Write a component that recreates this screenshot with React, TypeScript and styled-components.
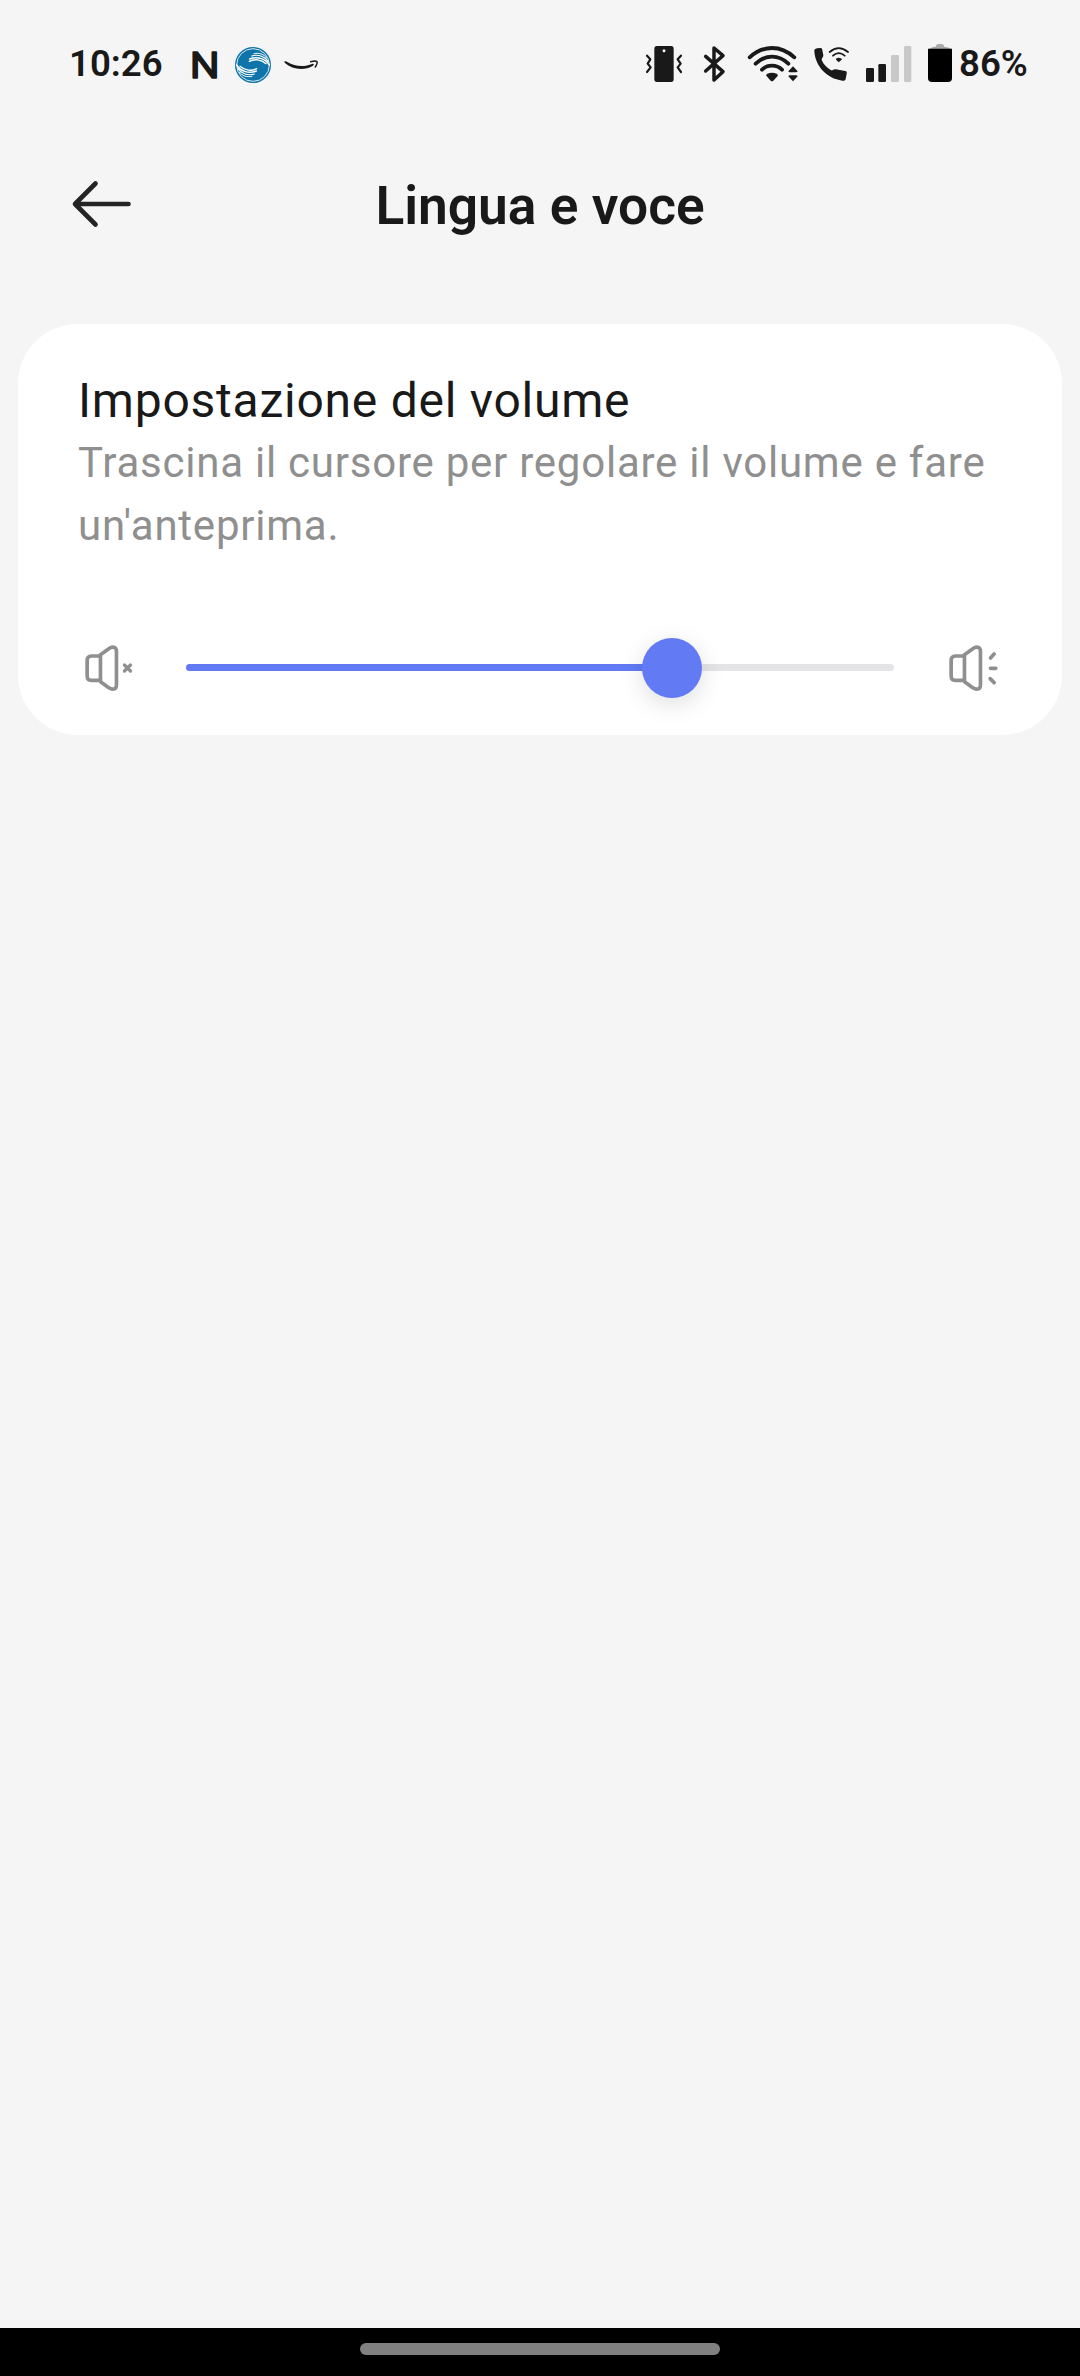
import React, { useState } from "react";
import styled, { createGlobalStyle } from "styled-components";

const INK = "#191919";
const GRAY = "#8f8f8f";
const PAGE = "#f5f5f5";

const GlobalStyle = createGlobalStyle`
  * { box-sizing: border-box; }
  body { margin: 0; background: ${PAGE}; font-family: Roboto, "Liberation Sans", sans-serif; }
`;

const Screen = styled.div`
  display: flex;
  flex-direction: column;
  width: 1080px;
  height: 2376px;
  background: ${PAGE};
  color: ${INK};
`;

const StatusBar = styled.div`
  display: flex;
  justify-content: space-between;
  height: 126px;
  padding: 30px 52px 0 69px;
`;

const StatusGroup = styled.div`
  display: flex;
  align-items: flex-start;
  height: 70px;
`;

const StatusText = styled.span<{ $width: number }>`
  width: ${(p) => p.$width}px;
  padding-top: 13px;
  font-size: 36.6px;
  font-weight: 560;
  line-height: 42px;
  white-space: nowrap;
`;

const StatusIcon = styled.svg<{ $width: number; $after?: number }>`
  display: block;
  flex: none;
  width: ${(p) => p.$width}px;
  height: 70px;
  margin-right: ${(p) => p.$after ?? 0}px;
`;

const Header = styled.header`
  display: grid;
  grid-template-columns: 72px 1fr 72px;
  align-items: center;
  height: 156px;
  padding: 0 66px;
`;

const BackButton = styled.button`
  display: flex;
  width: 72px;
  height: 72px;
  padding: 0;
  border: 0;
  background: none;
`;

const Title = styled.h1`
  margin: 4px 0 0;
  font-size: 53.3px;
  font-weight: 600;
  line-height: 64px;
  text-align: center;
`;

const Card = styled.section`
  display: flex;
  flex-direction: column;
  height: 411px;
  margin: 42px 18px 0;
  padding: 48px 60px 0;
  border-radius: 60px;
  background: #fff;
`;

const CardTitle = styled.h2`
  margin: 0;
  font-size: 48px;
  font-weight: 400;
  line-height: 57px;
  letter-spacing: 0.76px;
`;

const CardText = styled.p`
  margin: 2px 0 0;
  color: ${GRAY};
  font-size: 42px;
  line-height: 63px;
  letter-spacing: 0.76px;
`;

const VolumeRow = styled.div`
  display: flex;
  align-items: center;
  justify-content: space-between;
  height: 73px;
  margin-top: 74px;
`;

const SpeakerIcon = styled.svg`
  display: block;
  flex: none;
  width: 60px;
  height: 60px;
`;

const Track = styled.div`
  display: flex;
  align-items: center;
  width: 708px;
  height: 7px;
  border-radius: 4px;
  background: #e4e4e6;
`;

const Fill = styled.div`
  display: flex;
  align-items: center;
  justify-content: flex-end;
  height: 7px;
  border-radius: 4px;
  background: #627af4;
`;

const Thumb = styled.div`
  flex: none;
  width: 60px;
  height: 60px;
  margin-right: -30px;
  border-radius: 50%;
  background: #627af4;
  box-shadow: 0 6px 24px rgba(0, 0, 0, 0.13);
`;

const NavBar = styled.footer`
  display: flex;
  justify-content: center;
  height: 48px;
  margin-top: auto;
  padding-top: 15px;
  background: #000;
`;

const NavPill = styled.div`
  width: 360px;
  height: 12px;
  border-radius: 6px;
  background: #808080;
`;

const LetterLogo = () => (
  <StatusIcon $width={28} $after={15} viewBox="0 0 28 70">
    <text x="-1.2" y="47.9" textLength="30" lengthAdjust="spacingAndGlyphs" fontFamily="Roboto" fontSize="37" fontWeight="400" fill={INK} stroke={INK} strokeWidth="1.4" strokeLinejoin="round">N</text>
  </StatusIcon>
);

const swirlStreaks = (
  <>
    <path d="M612 71C628 67 642 73 650 84" strokeWidth="3" />
    <path d="M605 78C624 72 644 79 654 94" strokeWidth="3.5" />
    <path d="M599 87C620 78 646 85 658 105" strokeWidth="4.5" />
    <path d="M598 94C612 86 634 88 648 101" strokeWidth="4" />
  </>
);

const SwirlLogo = () => (
  <StatusIcon $width={38} $after={11} viewBox="552 0 114 210">
    <circle cx="609" cy="105" r="54" fill="#0f74a9" />
    <circle cx="609" cy="105" r="49" fill="none" stroke="#fff" strokeWidth="2.5" />
    <g fill="none" stroke="#fff" strokeLinecap="round">
      {swirlStreaks}
      <g transform="rotate(180 609 105)">{swirlStreaks}</g>
    </g>
  </StatusIcon>
);

const SmileLogo = () => (
  <StatusIcon $width={36} viewBox="699 0 108 210">
    <path d="M703 95C706 92 709 94 712 96C735 111 765 111 786 102C791 100 794 104 789 107C764 122 728 120 704 98Z" fill={INK} />
    <path d="M782 95C790 93 798 92 801 95C803 99 799 106 796 111" fill="none" stroke={INK} strokeWidth="4.5" strokeLinecap="round" />
  </StatusIcon>
);

const VibrateIcon = () => (
  <StatusIcon $width={38} $after={19} viewBox="45 0 114 210">
    <rect x="73" y="48" width="58" height="108" rx="8" fill={INK} />
    <circle cx="102" cy="62" r="4.5" fill={PAGE} />
    <path d="M51 77L61 88L53 101L62 112L51 126M153 77L143 88L152 101L143 112L153 126" fill="none" stroke={INK} strokeWidth="6.5" strokeLinecap="round" strokeLinejoin="round" />
  </StatusIcon>
);

const BluetoothIcon = () => (
  <StatusIcon $width={25} $after={19} viewBox="216 0 75 210">
    <path d="M227 79L279 125L252 150V54L279 77L227 123" fill="none" stroke={INK} strokeWidth="10.5" strokeLinecap="round" strokeLinejoin="round" />
  </StatusIcon>
);

const WifiIcon = () => (
  <StatusIcon $width={54} $after={13} viewBox="348 0 162 210">
    <g fill="none" stroke={INK} strokeWidth="11.5" strokeLinecap="round">
      <path d="M359 82Q390 54 426 54Q462 54 493 82" />
      <path d="M377 101Q399 80 426 80Q453 80 475 101" />
      <path d="M396 119Q408 107 426 107Q444 107 456 119" />
    </g>
    <path d="M409 137Q408 133 412 131Q426 125 440 131Q445 134 443 138L430 152Q426 156 422 152Z" fill={INK} />
    <path d="M489 109L503 124Q502 127 498 127H480Q476 127 475 124ZM489 154L503 139Q502 136 498 136H480Q476 136 475 139Z" fill={INK} />
  </StatusIcon>
);

const WifiCallIcon = () => (
  <StatusIcon $width={37} $after={15} viewBox="39 0 111 210">
    <path d="M43 64C42 58 46 57 51 55L62 54C66 54 67 57 67 61L70 76C71 81 64 85 65 90C71 104 80 113 92 120C97 123 101 116 107 118L136 123C140 124 141 127 140 131L137 147C136 151 133 153 127 152C80 146 46 108 43 64Z" fill={INK} />
    <g fill="none" stroke={INK} strokeWidth="5.5" strokeLinecap="round">
      <path d="M89 66Q116 43 144 66" />
      <path d="M99 77Q116 62 134 77" />
    </g>
    <path d="M108 86Q116 80 125 86Q127 88 124 90L116 97L109 90Q107 88 108 86Z" fill={INK} />
  </StatusIcon>
);

const SignalIcon = () => (
  <StatusIcon $width={47} $after={15} viewBox="195 0 141 210">
    <rect x="198" y="114" width="24" height="42" rx="4" fill={INK} />
    <rect x="235" y="102" width="23" height="54" rx="4" fill={INK} />
    <rect x="273" y="75" width="24" height="81" rx="4" fill="#c8c8c8" />
    <rect x="312" y="48" width="22" height="108" rx="4" fill="#c8c8c8" />
  </StatusIcon>
);

const BatteryIcon = () => (
  <StatusIcon $width={26} $after={6} viewBox="381 0 78 210">
    <path d="M388 57Q393 51 407 50Q408 42 415 42H425Q432 42 433 50Q447 51 453 57Z" fill="#a9a9a9" />
    <path d="M384 56H456V144Q456 156 444 156H396Q384 156 384 144Z" fill="#000" />
  </StatusIcon>
);

const speakerBody = (
  <>
    <path d="M42 24H20Q7 24 7 38V83Q7 97 20 97H42" />
    <path d="M47 24V97" />
    <path d="M47 20L72 2Q82-5 90-1Q95 2 95 11V110Q95 119 90 122Q82 126 72 119L47 101" />
  </>
);

const MutedSpeaker = () => (
  <SpeakerIcon viewBox="-20.4 -30 180 180" fill="none" stroke={GRAY} strokeWidth="11" strokeLinecap="round">
    {speakerBody}
    <path d="M119 51L137 69M137 51L119 69" strokeWidth="10" />
  </SpeakerIcon>
);

const LoudSpeaker = () => (
  <SpeakerIcon viewBox="-20.4 -30 180 180" fill="none" stroke={GRAY} strokeWidth="11" strokeLinecap="round">
    {speakerBody}
    <path d="M125 30L136 18M125 61H141M124 92L136 104" />
  </SpeakerIcon>
);

export default function App() {
  const [volume] = useState(68.64);
  return (
    <>
      <GlobalStyle />
      <Screen>
        <StatusBar>
          <StatusGroup>
            <StatusText $width={122}>10:26</StatusText>
            <LetterLogo />
            <SwirlLogo />
            <SmileLogo />
          </StatusGroup>
          <StatusGroup>
            <VibrateIcon />
            <BluetoothIcon />
            <WifiIcon />
            <WifiCallIcon />
            <SignalIcon />
            <BatteryIcon />
            <StatusText $width={69}>86%</StatusText>
          </StatusGroup>
        </StatusBar>
        <Header>
          <BackButton aria-label="Indietro">
            <svg width="72" height="72" viewBox="0 0 72 72" fill="none" stroke="#242424" strokeWidth="4.6" strokeLinecap="round" strokeLinejoin="round">
              <path d="M29.5 15.5L9 36L29.5 56.5M10 36H62.5" />
            </svg>
          </BackButton>
          <Title>Lingua e voce</Title>
        </Header>
        <Card>
          <CardTitle>Impostazione del volume</CardTitle>
          <CardText>Trascina il cursore per regolare il volume e fare un'anteprima.</CardText>
          <VolumeRow>
            <MutedSpeaker />
            <Track>
              <Fill style={{ width: `${volume}%` }}>
                <Thumb />
              </Fill>
            </Track>
            <LoudSpeaker />
          </VolumeRow>
        </Card>
        <NavBar>
          <NavPill />
        </NavBar>
      </Screen>
    </>
  );
}
